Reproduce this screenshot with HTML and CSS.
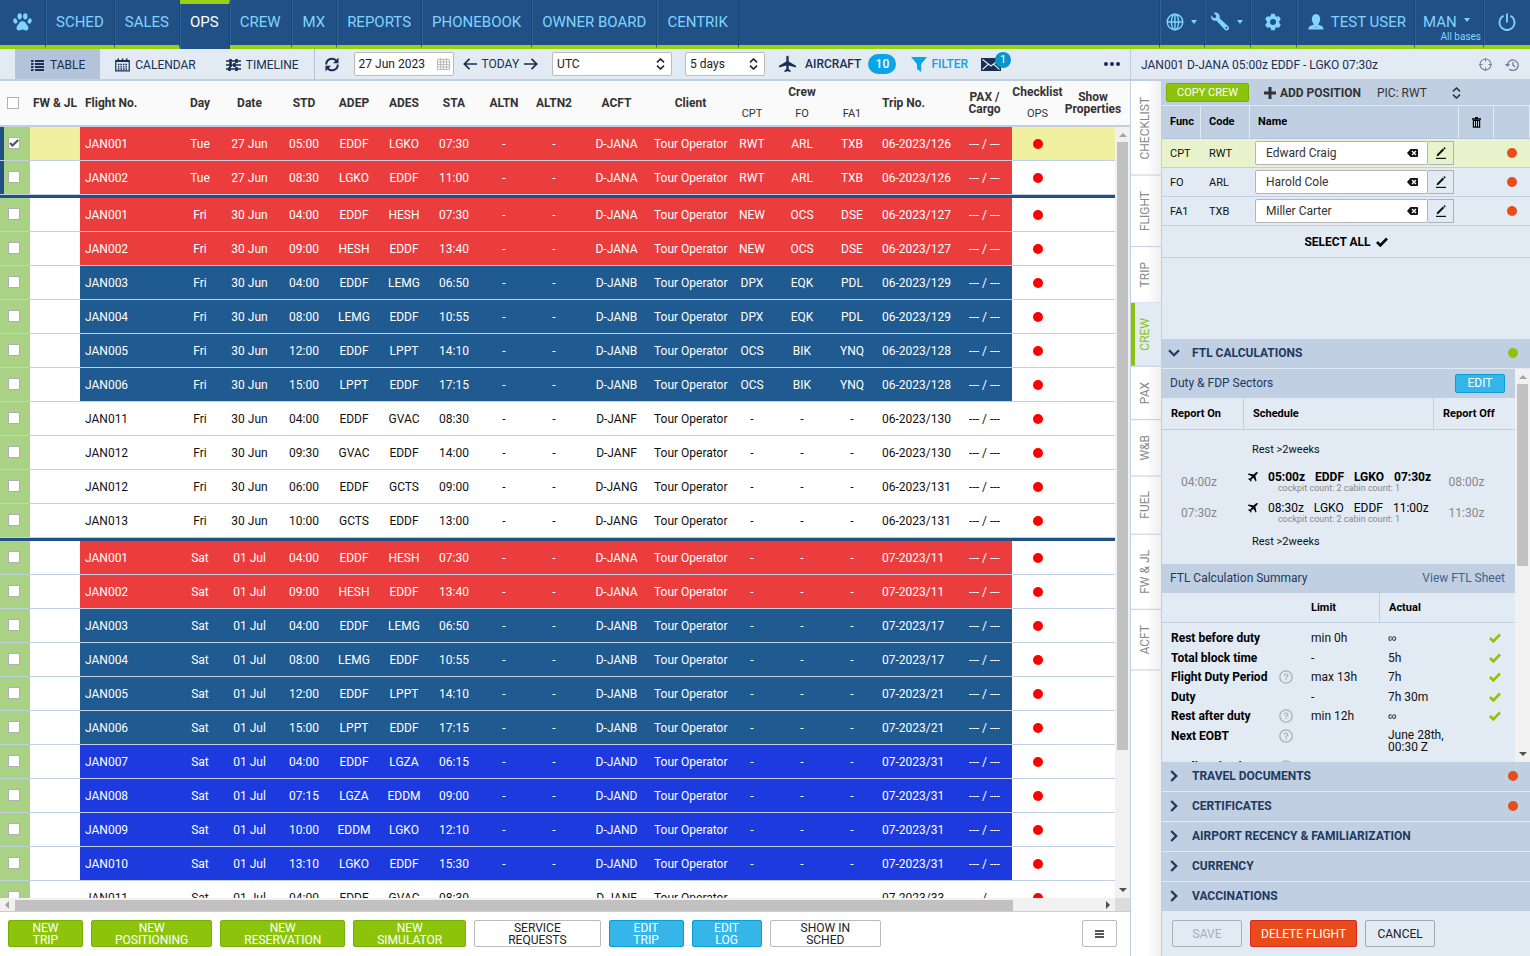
FILE: index.html
```html
<!DOCTYPE html>
<html lang="en">
<head>
<meta charset="utf-8">
<title>OPS - Flights table</title>
<link rel="stylesheet" href="styles.css">
</head>
<body>
<svg class="defs" aria-hidden="true">
  <symbol id="dot-check" viewBox="0 0 12 10"><path d="M1 5l3.300 3.400L11 1.500" fill="none" stroke="currentColor" stroke-width="2.600"/></symbol>
  <symbol id="updown" viewBox="0 0 9 12"><path d="M1 4.300l3.500-3.300 3.500 3.300M1 7.700l3.500 3.300 3.500-3.300" fill="none" stroke="currentColor" stroke-width="1.600"/></symbol>
  <symbol id="chev-right" viewBox="0 0 8 12"><path d="M1.200 1l5 5-5 5" fill="none" stroke="currentColor" stroke-width="2.300"/></symbol>
  <symbol id="chev-down" viewBox="0 0 12 8"><path d="M1 1.200l5 5 5-5" fill="none" stroke="currentColor" stroke-width="2.300"/></symbol>
  <symbol id="help" viewBox="0 0 14 14"><circle cx="7" cy="7" r="6.200" fill="none" stroke="currentColor" stroke-width="1.300"/><path d="M5.200 5.700c0-2.300 3.600-2.200 3.600-.2 0 1.300-1.800 1.300-1.800 2.700M7 9v1.300" fill="none" stroke="currentColor" stroke-width="1.200"/></symbol>
  <symbol id="clear" viewBox="0 0 11 8"><path d="M3.500 0H10a1 1 0 0 1 1 1v6a1 1 0 0 1-1 1H3.500L0 4z" fill="#111"/><path d="M5 2l4 4M9 2L5 6" stroke="#fff" stroke-width="1.300"/></symbol>
  <symbol id="pencil" viewBox="0 0 12 12"><path d="M1 11.400h10" stroke="#111" stroke-width="1.200"/><path d="M1.500 9.300l.6-2L7.800 1.600l1.400 1.400L3.500 8.700zM8.400 1L9.400 0l1.400 1.400-1 1z" fill="#111"/></symbol>
  <symbol id="jet" viewBox="0 0 20 20"><path d="M10 0c.9 0 1.400 1 1.400 2.500v4.700L20 12v2l-8.600-2.300v4.100l2.300 2V19.400L10 18.400 6.300 19.400v-1.600l2.300-2v-4.100L0 14v-2l8.600-4.800V2.500C8.600 1 9.100 0 10 0z" fill="currentColor"/></symbol>
  <symbol id="plane-up" viewBox="0 0 11 10"><path d="M10.600.2c.4.500-.2 1.500-1 2.300L8.300 3.800l1.200 5-.8.800L6.500 5.700 4.300 7.600l.2 1.500-.7.700L2.700 8.100.9 7l.7-.6 1.500.1L5 4.300.8 2.400l.8-.8 5.200.8L8.200 1.100C9 .3 10.200-.2 10.600.2z" fill="currentColor"/></symbol>
</svg>

<header class="nav">
  <nav class="nav-main" aria-label="Main">
    <a class="nav-item nav-logo" href="#" aria-label="Home"><svg width="19" height="18" viewBox="0 0 19 18" fill="currentColor"><ellipse cx="6.700" cy="3.300" rx="2.200" ry="3.100"/><ellipse cx="12.300" cy="3.300" rx="2.200" ry="3.100"/><ellipse cx="2.300" cy="8" rx="1.900" ry="2.700" transform="rotate(-20 2.300 8)"/><ellipse cx="16.700" cy="8" rx="1.900" ry="2.700" transform="rotate(20 16.700 8)"/><path d="M9.500 8.200c3 0 3.200 2.300 4.800 4 1.800 2 1.500 4.900-1 5.200-1.400.1-2.300-.8-3.800-.8s-2.400.9-3.800.8c-2.500-.3-2.800-3.200-1-5.200 1.600-1.700 1.800-4 4.800-4z"/></svg></a>
    <a class="nav-item" href="#">SCHED</a>
    <a class="nav-item" href="#">SALES</a>
    <a class="nav-item active" href="#" aria-current="page">OPS</a>
    <a class="nav-item" href="#">CREW</a>
    <a class="nav-item nav-wide" href="#">MX</a>
    <a class="nav-item" href="#">REPORTS</a>
    <a class="nav-item" href="#">PHONEBOOK</a>
    <a class="nav-item" href="#">OWNER BOARD</a>
    <a class="nav-item nav-last" href="#">CENTRIK</a>
  </nav>
  <div class="nav-tools">
    <button class="nav-item tool" aria-label="Language"><svg width="18" height="18" viewBox="0 0 18 18" fill="none" stroke="currentColor" stroke-width="1.400"><circle cx="9" cy="9" r="7.800"/><ellipse cx="9" cy="9" rx="3.600" ry="7.800"/><path d="M9 1v16M1 9h16"/></svg><span class="caret"></span></button>
    <button class="nav-item tool" aria-label="Tools"><svg width="19" height="19" viewBox="0 0 19 19"><path d="M2.500.8l2.900 2.900-.5 2-2 .5L.2 3.400C-.6 6.300 1.500 9.400 5.500 8.700l8 8.900c2.600 2.700 6.200-1 3.500-3.500L8.600 6.200C9.600 2.600 6.500-.5 2.500.8z" fill="currentColor"/><circle cx="15.300" cy="15.800" r="1" fill="#205086"/></svg><span class="caret"></span></button>
    <button class="nav-item tool" aria-label="Settings"><svg width="18" height="18" viewBox="0 0 18 18"><path d="M7.200.8h3.600l.6 2.200 1.400.8 2.200-.6 1.800 3.100-1.600 1.600v2.200l1.600 1.600-1.800 3.100-2.200-.6-1.400.8-.6 2.200H7.200L6.600 15l-1.400-.8-2.200.6-1.800-3.100 1.600-1.600V7.900L1.200 6.300 3 3.200l2.200.6L6.600 3z" fill="currentColor"/><circle cx="9" cy="9" r="3" fill="#205086"/></svg></button>
    <button class="nav-item tool user"><svg width="16" height="16" viewBox="0 0 16 16" fill="currentColor"><ellipse cx="8" cy="5.300" rx="4.200" ry="5.200"/><path d="M5.500 9h5v2.500L8 13.500l-2.500-2zM.5 15.500c0-3.500 2-3.900 4.700-4.500L8 14l2.800-3c2.700.6 4.700 1 4.700 4.500z"/></svg>TEST USER</button>
    <button class="nav-item tool base"><span class="base-name">MAN<span class="caret"></span></span><small>All bases</small></button>
    <button class="nav-item tool" aria-label="Log out"><svg width="18" height="18" viewBox="0 0 18 18" fill="none" stroke="currentColor" stroke-width="1.800"><path d="M5.600 2.800a7.500 7.500 0 1 0 6.800 0M9 .5v9"/></svg></button>
  </div>
</header>

<div class="app">
  <main class="board">
    <div class="toolbar">
      <button class="view current"><svg width="15" height="12" viewBox="0 0 15 12"><path d="M1 2h2.500M1 5h2.500M1 8h2.500M1 11h2.500M5 2h9M5 5h9M5 8h9M5 11h9" stroke="currentColor" stroke-width="2"/></svg>TABLE</button>
      <button class="view"><svg width="15" height="14" viewBox="0 0 16 14" fill="none" stroke="currentColor"><path d="M.8 2.300h14.400v11H.8z" stroke-width="1.300"/><path d="M1 3h14" stroke-width="1.600"/><path d="M3.500 0v3M8 0v3M12.500 0v3" stroke-width="1.700"/><path d="M3 6.500h10M3 9h10M3 11.300h10" stroke-width="1.500" stroke-dasharray="1.700 1"/></svg>CALENDAR</button>
      <button class="view"><svg width="15" height="12" viewBox="0 0 15 12" fill="none" stroke="currentColor"><path d="M0 2h15M0 6h15M0 10h15" stroke-width="1.600"/><path d="M4.500 0v4M10.500 0v4M4.500 4v4M8.500 4v4M3.500 8v4M10.500 8v4" stroke-width="2.600"/></svg>TIMELINE</button>
      <span class="divider"></span>
      <button class="plain refresh" aria-label="Refresh"><svg width="14" height="15" viewBox="0 0 14 15" fill="none" stroke="currentColor" stroke-width="2"><path d="M1.300 7.500C1 2 8.500-.5 11.700 4.300M12.700 7.500C13 13 5.500 15.500 2.300 10.700"/><path d="M13.500.5v5.800H8zM.5 14.500V8.700H6z" fill="currentColor" stroke="none"/></svg></button>
      <div class="field date"><input type="text" value="27 Jun 2023" aria-label="Date"><svg width="13" height="12" viewBox="0 0 13 12" fill="none" stroke="#bbb"><path d="M.5 1.500h12v10H.5zM.5 4h12M.5 6.500h12M.5 9h12M3.500 0v11.500M6.500 2v9.500M9.500 0v11.500"/></svg></div>
      <div class="today"><button class="plain" aria-label="Previous day"><svg width="14" height="12" viewBox="0 0 14 12" fill="none" stroke="currentColor" stroke-width="1.700"><path d="M6.500.8L1.300 6l5.200 5.200M1.300 6H14"/></svg></button><button class="plain">TODAY</button><button class="plain" aria-label="Next day"><svg width="14" height="12" viewBox="0 0 14 12" fill="none" stroke="currentColor" stroke-width="1.700"><path d="M7.500.8L12.700 6l-5.200 5.200M12.700 6H0"/></svg></button></div>
      <div class="field tz"><select aria-label="Time zone"><option>UTC</option></select><svg width="9" height="12"><use href="#updown"/></svg></div>
      <div class="field span"><select aria-label="Period"><option>5 days</option></select><svg width="9" height="12"><use href="#updown"/></svg></div>
      <button class="plain aircraft"><svg width="17" height="18" viewBox="0 0 20 20"><use href="#jet"/></svg>AIRCRAFT<span class="pill">10</span></button>
      <button class="plain filter"><svg width="16" height="15" viewBox="0 0 16 15"><path d="M0 0h16L10.200 7v8L6 12V7z" fill="currentColor"/></svg>FILTER</button>
      <button class="plain mail" aria-label="Messages"><svg width="20" height="13" viewBox="0 0 20 13"><rect width="20" height="13" fill="currentColor"/><path d="M1.500 1.500L10 8l8.500-6.500M1.500 11.500L7.500 6M18.500 11.500L12.500 6" fill="none" stroke="#e2eaf4" stroke-width="1.100"/></svg><span class="badge">1</span></button>
      <button class="plain more" aria-label="More"><svg width="16" height="4" viewBox="0 0 16 4" fill="currentColor"><circle cx="2" cy="2" r="2"/><circle cx="8" cy="2" r="2"/><circle cx="14" cy="2" r="2"/></svg></button>
    </div>

    <table class="flights head">
      <colgroup><col class="w30"><col class="w50"><col><col class="w40"><col class="w59"><col class="w50"><col class="w50"><col class="w50"><col class="w50"><col class="w50"><col class="w50"><col class="w75"><col class="w73"><col class="w50"><col class="w50"><col class="w50"><col class="w80"><col class="w55"><col class="w51"><col class="w67"></colgroup>
      <thead>
        <tr>
          <th rowspan="2" class="pick"><input type="checkbox" class="tick" aria-label="Select all flights"></th>
          <th rowspan="2">FW &amp; JL</th><th rowspan="2" class="left">Flight No.</th><th rowspan="2">Day</th><th rowspan="2">Date</th><th rowspan="2">STD</th><th rowspan="2">ADEP</th><th rowspan="2">ADES</th><th rowspan="2">STA</th><th rowspan="2">ALTN</th><th rowspan="2">ALTN2</th><th rowspan="2">ACFT</th><th rowspan="2">Client</th>
          <th colspan="3" class="group-name">Crew</th>
          <th rowspan="2" class="left">Trip No.</th><th rowspan="2">PAX /<br>Cargo</th>
          <th class="group-name">Checklist</th>
          <th rowspan="2" class="props">Show<br>Properties</th>
        </tr>
        <tr class="sub"><th>CPT</th><th>FO</th><th>FA1</th><th>OPS</th></tr>
      </thead>
    </table>
    <div class="grid">
      <div class="rows">
        <table class="flights" aria-label="Flights">
          <colgroup><col class="w30"><col class="w50"><col><col class="w40"><col class="w59"><col class="w50"><col class="w50"><col class="w50"><col class="w50"><col class="w50"><col class="w50"><col class="w75"><col class="w73"><col class="w50"><col class="w50"><col class="w50"><col class="w80"><col class="w55"><col class="w51"><col class="w52"></colgroup>
          <tbody id="flight-rows"></tbody>
        </table>
      </div>
      <div class="vbar" aria-hidden="true"><span class="arrow up"></span><span class="track"><span class="thumb main-thumb"></span></span><span class="arrow down"></span></div>
      <div class="hbar" aria-hidden="true"><span class="arrow lft"></span><span class="track"><span class="thumb"></span></span><span class="arrow rgt"></span></div>
      <div class="corner"></div>
    </div>

    <footer class="actions">
      <button class="btn green">NEW TRIP</button>
      <button class="btn green">NEW POSITIONING</button>
      <button class="btn green">NEW RESERVATION</button>
      <button class="btn green">NEW SIMULATOR</button>
      <button class="btn white roomiest">SERVICE REQUESTS</button>
      <button class="btn blue">EDIT TRIP</button>
      <button class="btn blue slim">EDIT LOG</button>
      <button class="btn white roomy">SHOW&nbsp;IN SCHED</button>
      <button class="btn white menu" aria-label="Menu"><svg width="9" height="8" viewBox="0 0 9 8"><path d="M0 1h9M0 4h9M0 7h9" stroke="#222" stroke-width="1.300"/></svg></button>
    </footer>
  </main>

  <aside class="side">
    <div class="side-title">
      <h2>JAN001 D-JANA 05:00z EDDF - LGKO 07:30z</h2>
      <button class="plain" aria-label="Locate"><svg width="13" height="13" viewBox="0 0 13 13" fill="none" stroke="currentColor" stroke-width="1.100"><circle cx="6.500" cy="6.500" r="5.500"/><path d="M6.500 0v3.500M6.500 9.500V13M0 6.500h3.500M9.500 6.500H13"/></svg></button>
      <button class="plain" aria-label="History"><svg width="14" height="12" viewBox="0 0 14 12" fill="none" stroke="currentColor" stroke-width="1.300"><path d="M2.600 6.500a5.300 5.300 0 1 1 1.700 3.600M8 3v3.300l2.300 1.400"/><path d="M0 5h5L2.500 8z" fill="currentColor" stroke="none"/></svg></button>
    </div>
    <div class="side-body">
      <nav class="tabs" aria-label="Flight sections">
        <a href="#">CHECKLIST</a><a href="#">FLIGHT</a><a href="#">TRIP</a><a href="#" class="current">CREW</a><a href="#">PAX</a><a href="#">W&amp;B</a><a href="#">FUEL</a><a href="#">FW &amp; JL</a><a href="#">ACFT</a>
      </nav>
      <div class="panel">
        <div class="crew-bar">
          <button class="btn-small green">COPY CREW</button>
          <button class="plain add"><svg width="12" height="12" viewBox="0 0 12 12"><path d="M6 0v12M0 6h12" stroke="currentColor" stroke-width="3"/></svg>ADD POSITION</button>
          <div class="pic"><select aria-label="Pilot in command"><option>PIC: RWT</option></select><svg width="9" height="12"><use href="#updown"/></svg></div>
        </div>
        <table class="crew">
          <colgroup><col class="c-func"><col class="c-code"><col><col class="c-del"><col class="c-dot"></colgroup>
          <thead><tr><th>Func</th><th>Code</th><th>Name</th><th class="mid"><svg width="9" height="11" viewBox="0 0 9 11"><path d="M0 2h9M3 .7h3" stroke="#000" stroke-width="1.300"/><path d="M1.400 3.500h6.200v6.700H1.400z" fill="none" stroke="#000" stroke-width="1.200"/><path d="M3.500 3.500v6.500M5.500 3.500v6.500" stroke="#000"/></svg></th><th></th></tr></thead>
          <tbody>
            <tr class="chosen"><td>CPT</td><td>RWT</td><td class="name"><div class="person"><input type="text" value="Edward Craig" aria-label="CPT name"><svg width="11" height="8"><use href="#clear"/></svg><button aria-label="Edit CPT"><svg width="12" height="12"><use href="#pencil"/></svg></button></div></td><td></td><td class="mid"><i class="dot orange"></i></td></tr>
            <tr><td>FO</td><td>ARL</td><td class="name"><div class="person"><input type="text" value="Harold Cole" aria-label="FO name"><svg width="11" height="8"><use href="#clear"/></svg><button aria-label="Edit FO"><svg width="12" height="12"><use href="#pencil"/></svg></button></div></td><td></td><td class="mid"><i class="dot orange"></i></td></tr>
            <tr><td>FA1</td><td>TXB</td><td class="name"><div class="person"><input type="text" value="Miller Carter" aria-label="FA1 name"><svg width="11" height="8"><use href="#clear"/></svg><button aria-label="Edit FA1"><svg width="12" height="12"><use href="#pencil"/></svg></button></div></td><td></td><td class="mid"><i class="dot orange"></i></td></tr>
          </tbody>
        </table>
        <button class="select-all">SELECT ALL <svg width="12" height="10"><use href="#dot-check"/></svg></button>
        <div class="filler"></div>

        <button class="fold open"><svg width="12" height="8"><use href="#chev-down"/></svg>FTL CALCULATIONS<i class="dot lime"></i></button>
        <div class="ftl">
          <div class="ftl-content">
            <div class="strip"><span>Duty &amp; FDP Sectors</span><button class="btn-small blue">EDIT</button></div>
            <table class="duty">
              <colgroup><col class="d-on"><col><col class="d-off"></colgroup>
              <thead><tr><th>Report On</th><th>Schedule</th><th>Report Off</th></tr></thead>
              <tbody>
                <tr class="rest"><td></td><td>Rest &gt;2weeks</td><td></td></tr>
                <tr class="strong"><td class="time">04:00z</td><td class="leg"><div class="sector"><svg width="11" height="10"><use href="#plane-up"/></svg><span>05:00z</span><span>EDDF</span><span>LGKO</span><span>07:30z</span></div><small>cockpit count: 2 cabin count: 1</small></td><td class="time off-time">08:00z</td></tr>
                <tr><td class="time">07:30z</td><td class="leg"><div class="sector"><svg width="11" height="10"><use href="#plane-up"/></svg><span>08:30z</span><span>LGKO</span><span>EDDF</span><span>11:00z</span></div><small>cockpit count: 2 cabin count: 1</small></td><td class="time off-time">11:30z</td></tr>
                <tr class="rest end"><td></td><td>Rest &gt;2weeks</td><td></td></tr>
              </tbody>
            </table>
            <div class="strip"><span>FTL Calculation Summary</span><a href="#">View FTL Sheet</a></div>
            <table class="summary">
              <colgroup><col><col class="s-help"><col class="s-limit"><col class="s-actual"><col class="s-ok"></colgroup>
              <thead><tr><th></th><th></th><th>Limit</th><th class="rule">Actual</th><th></th></tr></thead>
              <tbody>
                <tr><th>Rest before duty</th><td></td><td>min 0h</td><td class="inf">∞</td><td class="ok"><svg width="12" height="10"><use href="#dot-check"/></svg></td></tr>
                <tr><th>Total block time</th><td></td><td>-</td><td>5h</td><td class="ok"><svg width="12" height="10"><use href="#dot-check"/></svg></td></tr>
                <tr class="tall"><th>Flight Duty Period</th><td class="help"><svg width="14" height="14"><use href="#help"/></svg></td><td>max 13h</td><td>7h</td><td class="ok"><svg width="12" height="10"><use href="#dot-check"/></svg></td></tr>
                <tr><th>Duty</th><td></td><td>-</td><td>7h 30m</td><td class="ok"><svg width="12" height="10"><use href="#dot-check"/></svg></td></tr>
                <tr class="tall"><th>Rest after duty</th><td class="help"><svg width="14" height="14"><use href="#help"/></svg></td><td>min 12h</td><td class="inf">∞</td><td class="ok"><svg width="12" height="10"><use href="#dot-check"/></svg></td></tr>
                <tr class="double"><th>Next EOBT</th><td class="help"><svg width="14" height="14"><use href="#help"/></svg></td><td></td><td class="two">June 28th,<br>00:30 Z</td><td></td></tr>
                <tr class="tall"><th>Acclimatisation</th><td class="help"><svg width="14" height="14"><use href="#help"/></svg></td><td></td><td>+00:00</td><td></td></tr>
              </tbody>
            </table>
          </div>
          <div class="vbar" aria-hidden="true"><span class="arrow up"></span><span class="track"><span class="thumb side-thumb"></span></span><span class="arrow down"></span></div>
        </div>
        <button class="fold"><svg width="8" height="12"><use href="#chev-right"/></svg>TRAVEL DOCUMENTS<i class="dot orange"></i></button>
        <button class="fold"><svg width="8" height="12"><use href="#chev-right"/></svg>CERTIFICATES<i class="dot orange"></i></button>
        <button class="fold"><svg width="8" height="12"><use href="#chev-right"/></svg>AIRPORT RECENCY &amp; FAMILIARIZATION</button>
        <button class="fold"><svg width="8" height="12"><use href="#chev-right"/></svg>CURRENCY</button>
        <button class="fold last"><svg width="8" height="12"><use href="#chev-right"/></svg>VACCINATIONS</button>
        <div class="panel-actions">
          <button class="big" disabled>SAVE</button>
          <button class="big danger">DELETE FLIGHT</button>
          <button class="big">CANCEL</button>
        </div>
      </div>
    </div>
  </aside>
</div>
<script src="flights.js"></script>
</body>
</html>
```

FILE: styles.css
```css
* { box-sizing: border-box; }
html, body { height: 100%; }
body {
  margin: 0;
  display: flex;
  flex-direction: column;
  overflow: hidden;
  font: 12px/14px Roboto, "Liberation Sans", sans-serif;
  color: #111;
  background: #fff;
}
button, input, select { font: inherit; color: inherit; margin: 0; }
button { cursor: pointer; }
a { color: inherit; text-decoration: none; }
svg { flex: none; display: block; }
.defs { position: absolute; width: 0; height: 0; }
.plain { background: none; border: 0; padding: 0; display: flex; align-items: center; }

/* Top navigation */
.nav {
  flex: none;
  display: flex;
  justify-content: space-between;
  height: 49px;
  background: #205086;
  color: #80d4ff;
  font-size: 15px;
}
.nav-main { display: flex; flex: 1; }
.nav-tools { display: flex; }
.nav-main::after { content: ""; flex: 1; border-bottom: 4px solid #99d111; }
.nav-item {
  display: flex;
  align-items: center;
  padding: 0 10px 2px;
  border: 0;
  border-right: 1px solid #174873;
  border-bottom: 4px solid #99d111;
  background: none;
  box-shadow: inset 1px 0 #2a6496;
}
.nav-logo { padding: 0 13px 2px; box-shadow: none; }
.nav-wide { padding-left: 11px; padding-right: 11px; }
.nav-item.active { color: #fff; border-top: 4px solid #99d111; border-bottom: 0; padding-bottom: 10px; padding-top: 0; }
.tool { gap: 7px; min-width: 46px; padding-left: 4px; padding-right: 4px; justify-content: center; }
.tool:first-child { border-left: 1px solid #174873; }
.tool:last-child { border-right: 0; }
.caret { border: 3px solid transparent; border-top: 4px solid currentColor; border-bottom: 0; }
.user { padding-left: 11px; padding-right: 8px; }
.base { flex-direction: column; align-items: flex-start; gap: 0; padding: 14px 2px 0 8px; width: 69px; justify-content: flex-start; }
.base-name { display: flex; gap: 7px; line-height: 16px; }
.base-name .caret { margin-top: 4px; }
.base small { font-size: 10px; line-height: 13px; align-self: flex-end; }

.app { flex: 1; min-height: 0; display: flex; }
.board { flex: 1; min-width: 0; display: flex; flex-direction: column; }

/* Board toolbar */
.toolbar {
  flex: none;
  display: flex;
  align-items: center;
  height: 32px;
  padding: 0 10px 0 15px;
  border-bottom: 2px solid #c0cfe2;
  background: #e2eaf4;
  color: #1a2f52;
}
.view { display: flex; align-items: center; gap: 5px; height: 30px; padding: 1px 15px 0; border: 0; background: none; }
.view.current { background: #b3c3d9; }
.divider { width: 1px; height: 30px; background: #b3c3d9; }
.refresh { margin: 0 15px 0 10px; }
.field { display: flex; align-items: center; height: 24px; border: 1px solid #bbb; border-radius: 2px; background: #fff; color: #222; }
.field svg { margin-right: 6px; color: #222; }
.field input, .field select, .pic select { flex: 1; min-width: 0; height: 20px; padding: 0 0 0 4px; border: 0; background: none; appearance: none; outline: 0; }
.date { width: 100px; }
.date svg { margin-right: 3px; }
.today { display: flex; gap: 5px; margin: 0 14px 0 9px; }
.tz { width: 120px; margin-right: 13px; }
.span { width: 80px; }
.aircraft { gap: 9px; margin-left: 14px; font-weight: 500; }
.pill { min-width: 28px; height: 20px; border-radius: 10px; margin-left: -2px; background: #0aa5e6; color: #fff; line-height: 20px; text-align: center; }
.filter { gap: 4px; margin-left: 15px; color: #0aa5e6; font-weight: 500; }
.mail { position: relative; margin-left: 13px; }
.badge { position: absolute; left: 14px; top: -6px; width: 16px; height: 16px; border-radius: 8px; background: #0796cb; color: #fff; font-size: 11px; line-height: 16px; text-align: center; }
.more { margin-left: auto; }

/* Flights table */
.flights { width: 100%; table-layout: fixed; border-spacing: 0; }
.flights th, .flights td { padding: 0; text-align: center; white-space: nowrap; }
.flights .left { text-align: left; padding-left: 5px; }
.w30 { width: 30px; } .w40 { width: 40px; } .w50 { width: 50px; } .w51 { width: 51px; } .w52 { width: 52px; }
.w55 { width: 55px; } .w59 { width: 59px; } .w67 { width: 67px; } .w73 { width: 73px; } .w75 { width: 75px; } .w80 { width: 80px; }
.head { flex: none; height: 46px; background: #fafafa; border-bottom: 2px solid #c0cfe2; color: #333; line-height: 12px; }
.head th { font-weight: 700; }
.head .group-name { height: 22px; }
.head .sub th { height: 22px; font-size: 11px; font-weight: 400; }
.head .props { padding-right: 7px; }
.tick {
  appearance: none;
  display: block;
  width: 12px;
  height: 12px;
  margin-left: 8px;
  border: 1px solid #b0b0b0;
  background: #fff;
}
.head .tick { margin-left: 7px; }
.tick:checked { background: #fff url("data:image/svg+xml,%3Csvg xmlns='http://www.w3.org/2000/svg' viewBox='0 0 10 10'%3E%3Cpath d='M1 5l2.500 2.500L9.200 2' fill='none' stroke='%23555' stroke-width='2.200'/%3E%3C/svg%3E"); }

.grid { flex: 1; min-height: 0; display: grid; grid-template: minmax(0, 1fr) 13px / minmax(0, 1fr) 15px; border-bottom: 1px solid #c0cfe2; }
.rows { overflow: hidden; }
.rows td { height: 34px; border-bottom: 1px solid #c0cfe2; }
.rows tr.break td { height: 3px; border: 0; background: #205086; }
.rows .pick { padding-bottom: 2px; background: #a9d284; }
.rows .flagged .pick { box-shadow: inset 4px 0 #205086; }
.rows .picked .off { background: #f1efa0; }
.red .on { background: #eb3d3d; color: #fff; }
.navy .on { background: #1f5a91; color: #fff; }
.royal .on { background: #1c3ade; color: #fff; }
.dot { display: inline-block; width: 10px; height: 10px; border-radius: 5px; vertical-align: middle; background: #f00; }
.dot.orange { background: #e84c1a; }
.dot.lime { background: #8cc40c; }

/* Scrollbars */
.vbar, .hbar { display: flex; align-items: center; background: #f1f1f1; }
.vbar { flex-direction: column; }
.vbar .track, .hbar .track { flex: 1; display: flex; }
.vbar .track { width: 11px; min-height: 0; }
.thumb { background: #c1c1c1; flex: 0 0 auto; }
.main-thumb { width: 11px; height: 82%; }
.side-thumb { width: 11px; height: 50%; }
.hbar .track { height: 11px; align-self: flex-end; }
.hbar .thumb { width: 92%; }
.arrow { flex: none; border: 4px solid transparent; }
.up { margin: 2px 0 5px; border-bottom-color: #a3a3a3; }
.down { margin: 4px 0 2px; border-top-color: #505050; }
.lft { margin: 0 6px 0 1px; border-right-color: #a3a3a3; }
.rgt { margin: 0 1px 0 6px; border-left-color: #505050; }
.corner { background: #dcdcdc; }

/* Bottom actions */
.actions { flex: none; display: flex; gap: 8px; align-items: flex-start; height: 44px; padding: 8px 13px 0 8px; }
.btn { width: min-content; min-width: 75px; height: 27px; padding: 0 23px; border: 1px solid; border-radius: 2px; line-height: 12px; text-align: center; }
.roomy { padding: 0 30px; }
.roomiest { padding: 0 33px; }
.slim { min-width: 70px; padding: 0 21px; }
.green { background: #8cc40c; border-color: #79ad06; color: #fff; }
.blue { background: #35b5e8; border-color: #0a9ed6; color: #fff; }
.white { background: #fff; border-color: #bbb; color: #222; }
.menu { width: 35px; min-width: 35px; padding: 0 12px; margin-left: auto; }

/* Side panel */
.side { flex: 0 0 400px; display: flex; flex-direction: column; border-left: 1px solid #c0cfe2; }
.side-title { flex: none; display: flex; align-items: center; gap: 13px; height: 32px; padding: 1px 11px 0 10px; border-bottom: 2px solid #c0cfe2; background: #e2eaf4; color: #1a2f52; }
.side-title h2 { flex: 1; margin: 0; font-size: 12px; font-weight: 400; }
.side-title button { color: #6f7f99; }
.side-body { flex: 1; min-height: 0; display: flex; }
.tabs { flex: none; width: 30px; display: flex; flex-direction: column; padding-top: 1px; background: linear-gradient(to right, #fff 50%, #efefef); color: #888; }
.tabs a { display: flex; align-items: center; justify-content: center; writing-mode: vertical-rl; transform: rotate(180deg); padding: 15px 0 15px 2px; border-top: 1px solid #c0cfe2; }
.tabs .current { background: #e2eaf4; color: #8cc40c; box-shadow: inset -4px 0 #8cc40c; }
.panel { flex: 1; min-width: 0; display: flex; flex-direction: column; border-left: 1px solid #c0cfe2; background: #e2eaf4; }
.crew-bar { flex: none; display: flex; align-items: center; height: 25px; padding: 0 0 1px 4px; border-bottom: 1px solid #e2eaf4; background: #c0cfe2; color: #333; }
.btn-small { height: 19px; border: 1px solid; border-radius: 2px; padding: 0 10px; line-height: 16px; font-size: 12px; }
.btn-small.green { font-size: 11px; background: #8cc40c; border-color: #79ad06; color: #fff; }
.btn-small.blue { width: 50px; padding: 0; background: #35b5e8; border-color: #0a9ed6; color: #fff; }
.add { gap: 4px; margin-left: 15px; font-weight: 700; }
.pic { display: flex; align-items: center; width: 88px; margin-left: 12px; color: #333; }
.crew, .duty, .summary { width: 100%; table-layout: fixed; border-spacing: 0; flex: none; }
.crew th, .duty th { font-size: 11px; text-align: left; color: #000; }
.crew th { height: 33px; padding: 0 0 0 8px; background: #c0cfe2; border-right: 1px solid #e2eaf4; border-bottom: 1px solid #b3c3d9; }
.crew td { height: 29px; padding: 1px 0 0 8px; border-bottom: 1px solid #c0cfe2; font-size: 11px; }
.crew .mid { text-align: center; padding: 0; }
.crew th.mid svg { margin: auto; }
.crew .name { padding: 0 5px; }
.crew .chosen td { background: #e8f3cd; }
.c-func { width: 39px; } .c-code { width: 49px; } .c-del { width: 35px; } .c-dot { width: 36px; }
.person { position: relative; display: flex; font-size: 12px; }
.person input { flex: 1; min-width: 0; height: 24px; padding: 0 0 0 10px; border: 1px solid #b5b5b5; border-radius: 2px; background: #fff; color: #333; }
.person > svg { position: absolute; right: 36px; top: 8px; }
.person button { flex: none; display: flex; align-items: center; justify-content: center; width: 26px; padding: 0; border: 1px solid #a9b3bf; border-left: 0; background: none; }
.select-all { flex: none; display: flex; align-items: center; justify-content: center; gap: 5px; height: 32px; border: 0; border-bottom: 1px solid #c0cfe2; background: none; font-weight: 700; color: #000; }
.filler { flex: 0 0 81px; }
.fold { flex: none; display: flex; align-items: center; height: 30px; padding: 0 12px 2px 8px; border: 0; border-bottom: 1px solid #e2eaf4; background: #c0cfe2; color: #1d3a60; font-weight: 700; text-align: left; }
.fold svg { margin-right: 14px; }
.fold.open { padding-left: 6px; }
.fold.open svg { margin-right: 12px; }
.fold.last { height: 29px; border-bottom: 0; }
.fold .dot { margin-left: auto; }
.ftl { flex: 1; min-height: 0; display: flex; }
.ftl-content { flex: 1; min-width: 0; overflow: hidden; }
.ftl .vbar { width: 15px; }
.strip { display: flex; align-items: center; justify-content: space-between; height: 29px; padding: 0 10px 1px 8px; background: #c0cfe2; color: #1d3a60; }
.strip a { color: #44618a; }
.d-on { width: 82px; } .d-off { width: 81px; }
.duty thead th { height: 32px; padding: 0 0 0 9px; border-right: 1px solid #c0cfe2; border-bottom: 1px solid #c0cfe2; }
.duty thead th:last-child { border-right: 0; }
.duty td { height: 31px; padding: 0; vertical-align: middle; }
.duty .rest td { height: 36px; padding: 4px 0 0 8px; font-size: 11px; }
.duty .rest.end td { padding: 0 0 8px 8px; }
.duty .time { text-align: center; color: #888; padding-right: 8px; }
.duty .off-time { padding-right: 16px; }
.leg { text-align: center; }
.sector { display: flex; align-items: center; gap: 10px; padding-left: 3px; height: 13px; color: #000; }
.strong .sector { font-weight: 700; }
.leg small { display: block; font-size: 9px; line-height: 10px; color: #888; }
.summary th { text-align: left; color: #000; padding: 0; }
.summary thead th { height: 30px; padding: 0; border-bottom: 1px solid #c0cfe2; font-size: 11px; }
.summary thead .rule { border-left: 1px solid #c0cfe2; padding-left: 9px; }
.summary tbody th, .summary tbody td { height: 19px; vertical-align: middle; padding: 0; }
.summary tbody th { padding-left: 9px; white-space: nowrap; }
.summary tbody td:nth-child(4) { padding-left: 9px; }
.summary tbody .ok { padding-left: 3px; }
.summary .tall > * { height: 20px; }
.summary .double > th, .summary .double > td { height: 31px; vertical-align: top; padding-top: 3px; }
.summary tbody tr:first-child > * { height: 25px; padding-top: 5px; }
.summary .two { line-height: 12px; }
.inf { font-family: "Liberation Sans", sans-serif; }
.s-help { width: 32px; } .s-limit { width: 68px; } .s-actual { width: 107px; } .s-ok { width: 29px; }
.help svg { color: #a6afba; }
.ok svg { color: #8cc40c; }
.panel-actions { flex: none; display: flex; gap: 8px; height: 45px; padding: 9px 10px; }
.big { min-width: 70px; height: 27px; padding: 0 10px; border: 1px solid #9fa9b6; border-radius: 2px; background: none; color: #222; }
.big:disabled { color: #a6afba; border-color: #a6afba; }
.danger { background: #e84c1a; border-color: #d9281e; color: #fff; }
```

FILE: flights.js
```js
// flight | STD | ADEP | ADES | STA | aircraft | crew | trip | colour | selected
const groups = [
  { day: 'Tue', date: '27 Jun', flagged: true, flights: [
    ['JAN001', '05:00', 'EDDF', 'LGKO', '07:30', 'A', 'RWT ARL TXB', '06-2023/126', 'red', true],
    ['JAN002', '08:30', 'LGKO', 'EDDF', '11:00', 'A', 'RWT ARL TXB', '06-2023/126', 'red'],
  ] },
  { day: 'Fri', date: '30 Jun', flights: [
    ['JAN001', '04:00', 'EDDF', 'HESH', '07:30', 'A', 'NEW OCS DSE', '06-2023/127', 'red'],
    ['JAN002', '09:00', 'HESH', 'EDDF', '13:40', 'A', 'NEW OCS DSE', '06-2023/127', 'red'],
    ['JAN003', '04:00', 'EDDF', 'LEMG', '06:50', 'B', 'DPX EQK PDL', '06-2023/129', 'navy'],
    ['JAN004', '08:00', 'LEMG', 'EDDF', '10:55', 'B', 'DPX EQK PDL', '06-2023/129', 'navy'],
    ['JAN005', '12:00', 'EDDF', 'LPPT', '14:10', 'B', 'OCS BIK YNQ', '06-2023/128', 'navy'],
    ['JAN006', '15:00', 'LPPT', 'EDDF', '17:15', 'B', 'OCS BIK YNQ', '06-2023/128', 'navy'],
    ['JAN011', '04:00', 'EDDF', 'GVAC', '08:30', 'F', '- - -', '06-2023/130', ''],
    ['JAN012', '09:30', 'GVAC', 'EDDF', '14:00', 'F', '- - -', '06-2023/130', ''],
    ['JAN012', '06:00', 'EDDF', 'GCTS', '09:00', 'G', '- - -', '06-2023/131', ''],
    ['JAN013', '10:00', 'GCTS', 'EDDF', '13:00', 'G', '- - -', '06-2023/131', ''],
  ] },
  { day: 'Sat', date: '01 Jul', flights: [
    ['JAN001', '04:00', 'EDDF', 'HESH', '07:30', 'A', '- - -', '07-2023/11', 'red'],
    ['JAN002', '09:00', 'HESH', 'EDDF', '13:40', 'A', '- - -', '07-2023/11', 'red'],
    ['JAN003', '04:00', 'EDDF', 'LEMG', '06:50', 'B', '- - -', '07-2023/17', 'navy'],
    ['JAN004', '08:00', 'LEMG', 'EDDF', '10:55', 'B', '- - -', '07-2023/17', 'navy'],
    ['JAN005', '12:00', 'EDDF', 'LPPT', '14:10', 'B', '- - -', '07-2023/21', 'navy'],
    ['JAN006', '15:00', 'LPPT', 'EDDF', '17:15', 'B', '- - -', '07-2023/21', 'navy'],
    ['JAN007', '04:00', 'EDDF', 'LGZA', '06:15', 'D', '- - -', '07-2023/31', 'royal'],
    ['JAN008', '07:15', 'LGZA', 'EDDM', '09:00', 'D', '- - -', '07-2023/31', 'royal'],
    ['JAN009', '10:00', 'EDDM', 'LGKO', '12:10', 'D', '- - -', '07-2023/31', 'royal'],
    ['JAN010', '13:10', 'LGKO', 'EDDF', '15:30', 'D', '- - -', '07-2023/31', 'royal'],
    ['JAN011', '04:00', 'EDDF', 'GVAC', '08:30', 'F', '- - -', '07-2023/33', ''],
  ] },
];

const cell = (text, left) => `<td class="on${left ? ' left' : ''}">${text}</td>`;

const row = (group, f) => {
  const [no, std, adep, ades, sta, reg, crew, trip, colour, picked] = f;
  const classes = [colour, group.flagged ? 'flagged' : '', picked ? 'picked' : ''].join(' ').trim();
  const middle = [group.day, group.date, std, adep, ades, sta, '-', '-', 'D-JAN' + reg, 'Tour Operator', ...crew.split(' ')];
  return `<tr class="${classes}">
    <td class="pick"><input type="checkbox" class="tick" aria-label="Select ${no} ${group.date}"${picked ? ' checked' : ''}></td>
    <td class="off"></td>${cell(no, true)}${middle.map((t) => cell(t)).join('')}${cell(trip, true)}${cell('--- / ---')}
    <td class="off"><i class="dot"></i></td><td class="off"></td></tr>`;
};

document.getElementById('flight-rows').innerHTML = groups
  .map((g) => g.flights.map((f) => row(g, f)).join(''))
  .join('<tr class="break"><td colspan="20"></td></tr>');
```
